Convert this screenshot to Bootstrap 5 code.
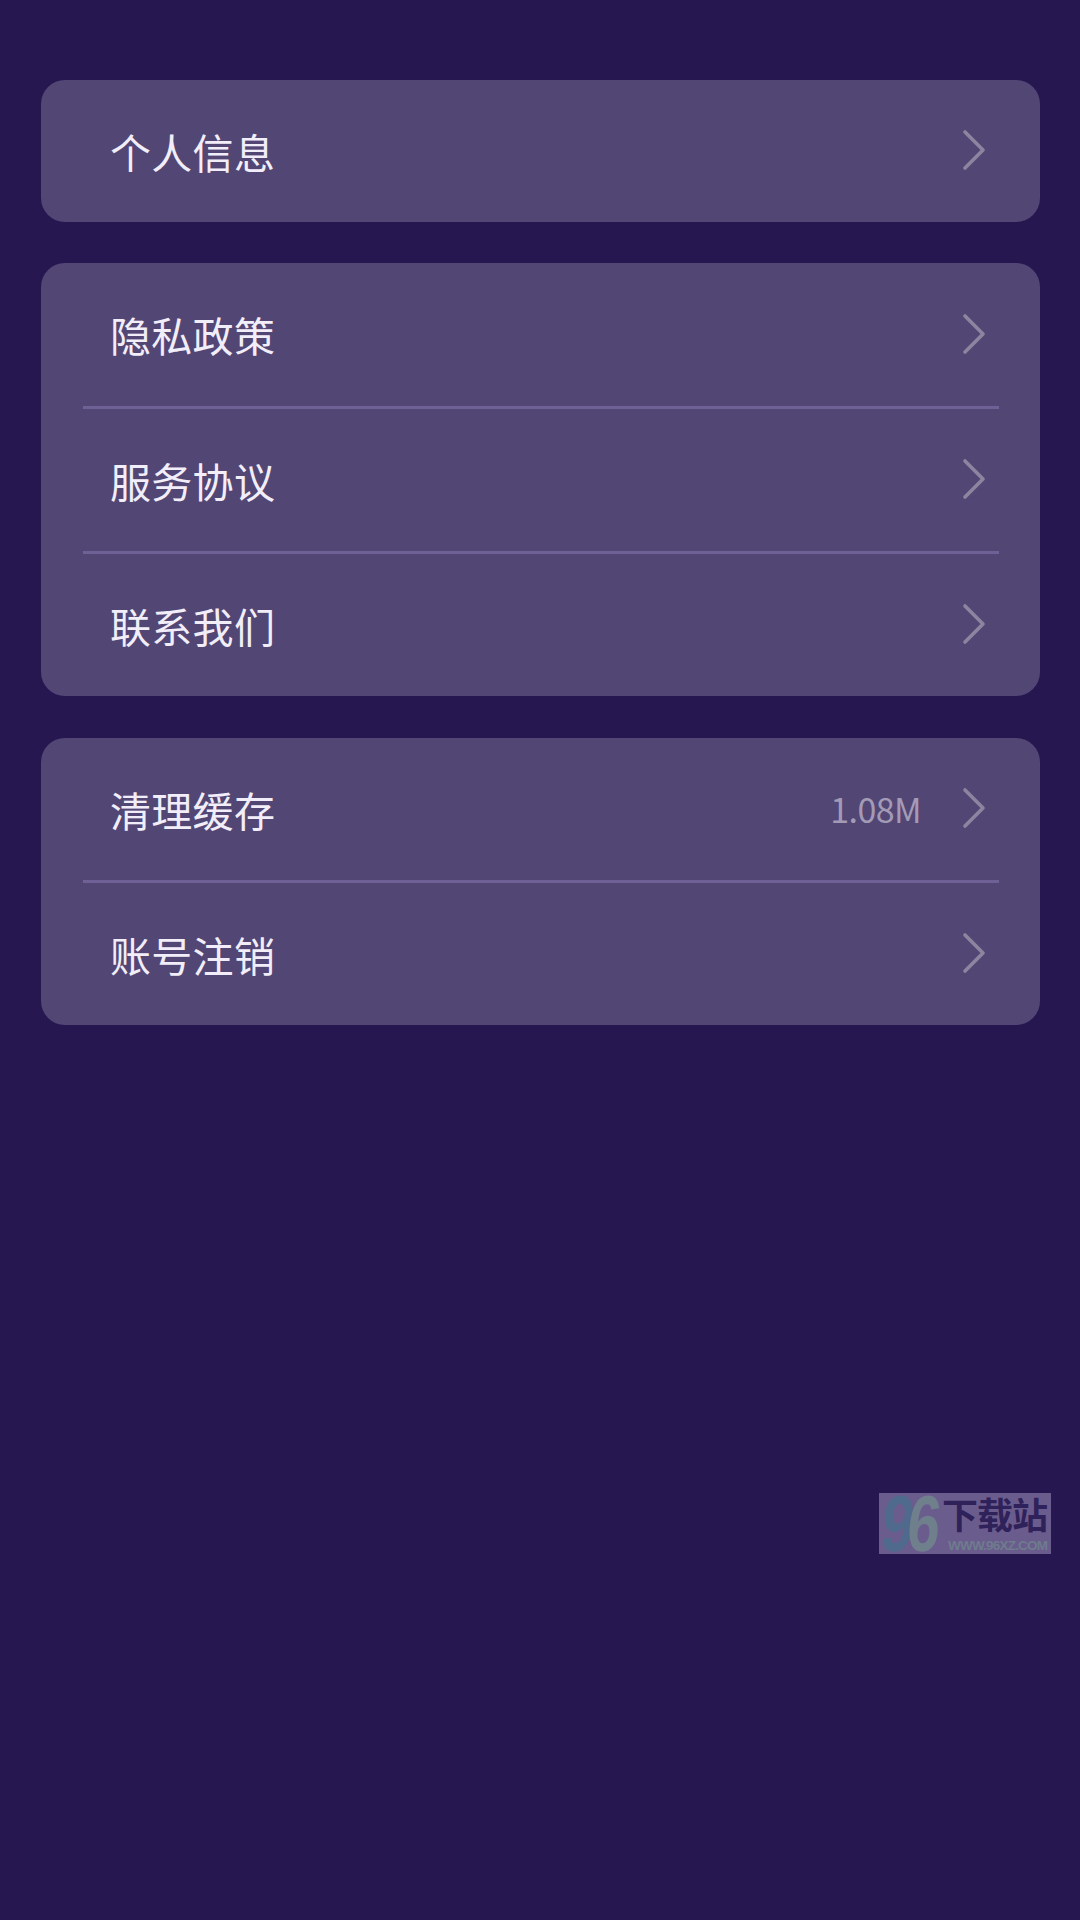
<!DOCTYPE html>
<html lang="zh">
<head>
<meta charset="utf-8">
<title>设置</title>
<link href="https://cdn.jsdelivr.net/npm/bootstrap@5.3.0/dist/css/bootstrap.min.css" rel="stylesheet">
<style>
html, body { height: 100%; }
body { background: #261751; font-family: "Noto Sans CJK SC", "Noto Sans", sans-serif; min-height: 1920px; position: relative; }
.page-wrap { padding: 80px 40px 0 41px; display: flex; flex-direction: column; gap: 41px; }
.set-card { background: #524675; border: 0; border-radius: 24px; padding: 0 41px 0 42px; }
.set-card:nth-child(3) { margin-top: 1px; }
.set-card:nth-child(2) .set-row:first-child { height: 143px; }
.set-row { height: 142px; display: flex; align-items: center; background: transparent; border: 0; padding: 0 0 0 27px; color: #f2eef9; font-size: 41px; letter-spacing: 0.3px; line-height: 1; font-weight: 400; }
.set-row + .set-row { border-top: 3px solid #6f6195; height: 145px; }
.set-label { flex: 1 1 auto; }
.set-value { color: #a39bb5; font-size: 34px; margin-right: 41px; font-weight: 400; letter-spacing: -0.6px; }
.set-chev { width: 24px; height: 42px; margin-right: 13px; margin-top: -2px; flex: none; }
.wm { position: absolute; left: 879px; top: 1493px; width: 172px; height: 61px; overflow: visible; }
.wm-digits { font-family: "Liberation Sans", sans-serif; font-weight: 700; font-size: 62px; }
.wm-title { font-family: "Noto Sans CJK SC", sans-serif; font-weight: 700; font-size: 36px; letter-spacing: 0; }
.wm-url { font-family: "Liberation Sans", sans-serif; font-weight: 700; font-size: 13.5px; }
</style>
</head>
<body>
<main class="page-wrap">
  <div class="card set-card">
    <div class="set-row">
      <span class="set-label">个人信息</span>
      <svg class="set-chev" viewBox="0 0 24 42" fill="none" stroke="#8d859f" stroke-width="3.6" stroke-linecap="round" stroke-linejoin="round"><path d="M3 3 21 21 3 39"/></svg>
    </div>
  </div>
  <div class="card set-card">
    <div class="set-row">
      <span class="set-label">隐私政策</span>
      <svg class="set-chev" viewBox="0 0 24 42" fill="none" stroke="#8d859f" stroke-width="3.6" stroke-linecap="round" stroke-linejoin="round"><path d="M3 3 21 21 3 39"/></svg>
    </div>
    <div class="set-row">
      <span class="set-label">服务协议</span>
      <svg class="set-chev" viewBox="0 0 24 42" fill="none" stroke="#8d859f" stroke-width="3.6" stroke-linecap="round" stroke-linejoin="round"><path d="M3 3 21 21 3 39"/></svg>
    </div>
    <div class="set-row">
      <span class="set-label">联系我们</span>
      <svg class="set-chev" viewBox="0 0 24 42" fill="none" stroke="#8d859f" stroke-width="3.6" stroke-linecap="round" stroke-linejoin="round"><path d="M3 3 21 21 3 39"/></svg>
    </div>
  </div>
  <div class="card set-card">
    <div class="set-row">
      <span class="set-label">清理缓存</span>
      <span class="set-value">1.08M</span>
      <svg class="set-chev" viewBox="0 0 24 42" fill="none" stroke="#8d859f" stroke-width="3.6" stroke-linecap="round" stroke-linejoin="round"><path d="M3 3 21 21 3 39"/></svg>
    </div>
    <div class="set-row">
      <span class="set-label">账号注销</span>
      <svg class="set-chev" viewBox="0 0 24 42" fill="none" stroke="#8d859f" stroke-width="3.6" stroke-linecap="round" stroke-linejoin="round"><path d="M3 3 21 21 3 39"/></svg>
    </div>
  </div>
</main>
<svg class="wm" viewBox="0 0 172 61" aria-label="96下载站">
  <rect width="172" height="61" fill="#6b5c8e"/>
  <text class="wm-digits" transform="translate(0 58) skewX(-6) scale(.95 1.28)" fill="#4f6a8c">9</text>
  <text class="wm-digits" transform="translate(26 58) skewX(-6) scale(.95 1.28)" fill="#6f7f8c">6</text>
  <text class="wm-title" x="63" y="36" fill="#2f2159" textLength="106">下载站</text>
  <text class="wm-url" x="69" y="57" fill="#6e7b8d" textLength="100">WWW.96XZ.COM</text>
</svg>
<script src="https://cdn.jsdelivr.net/npm/bootstrap@5.3.0/dist/js/bootstrap.bundle.min.js"></script>
</body>
</html>
